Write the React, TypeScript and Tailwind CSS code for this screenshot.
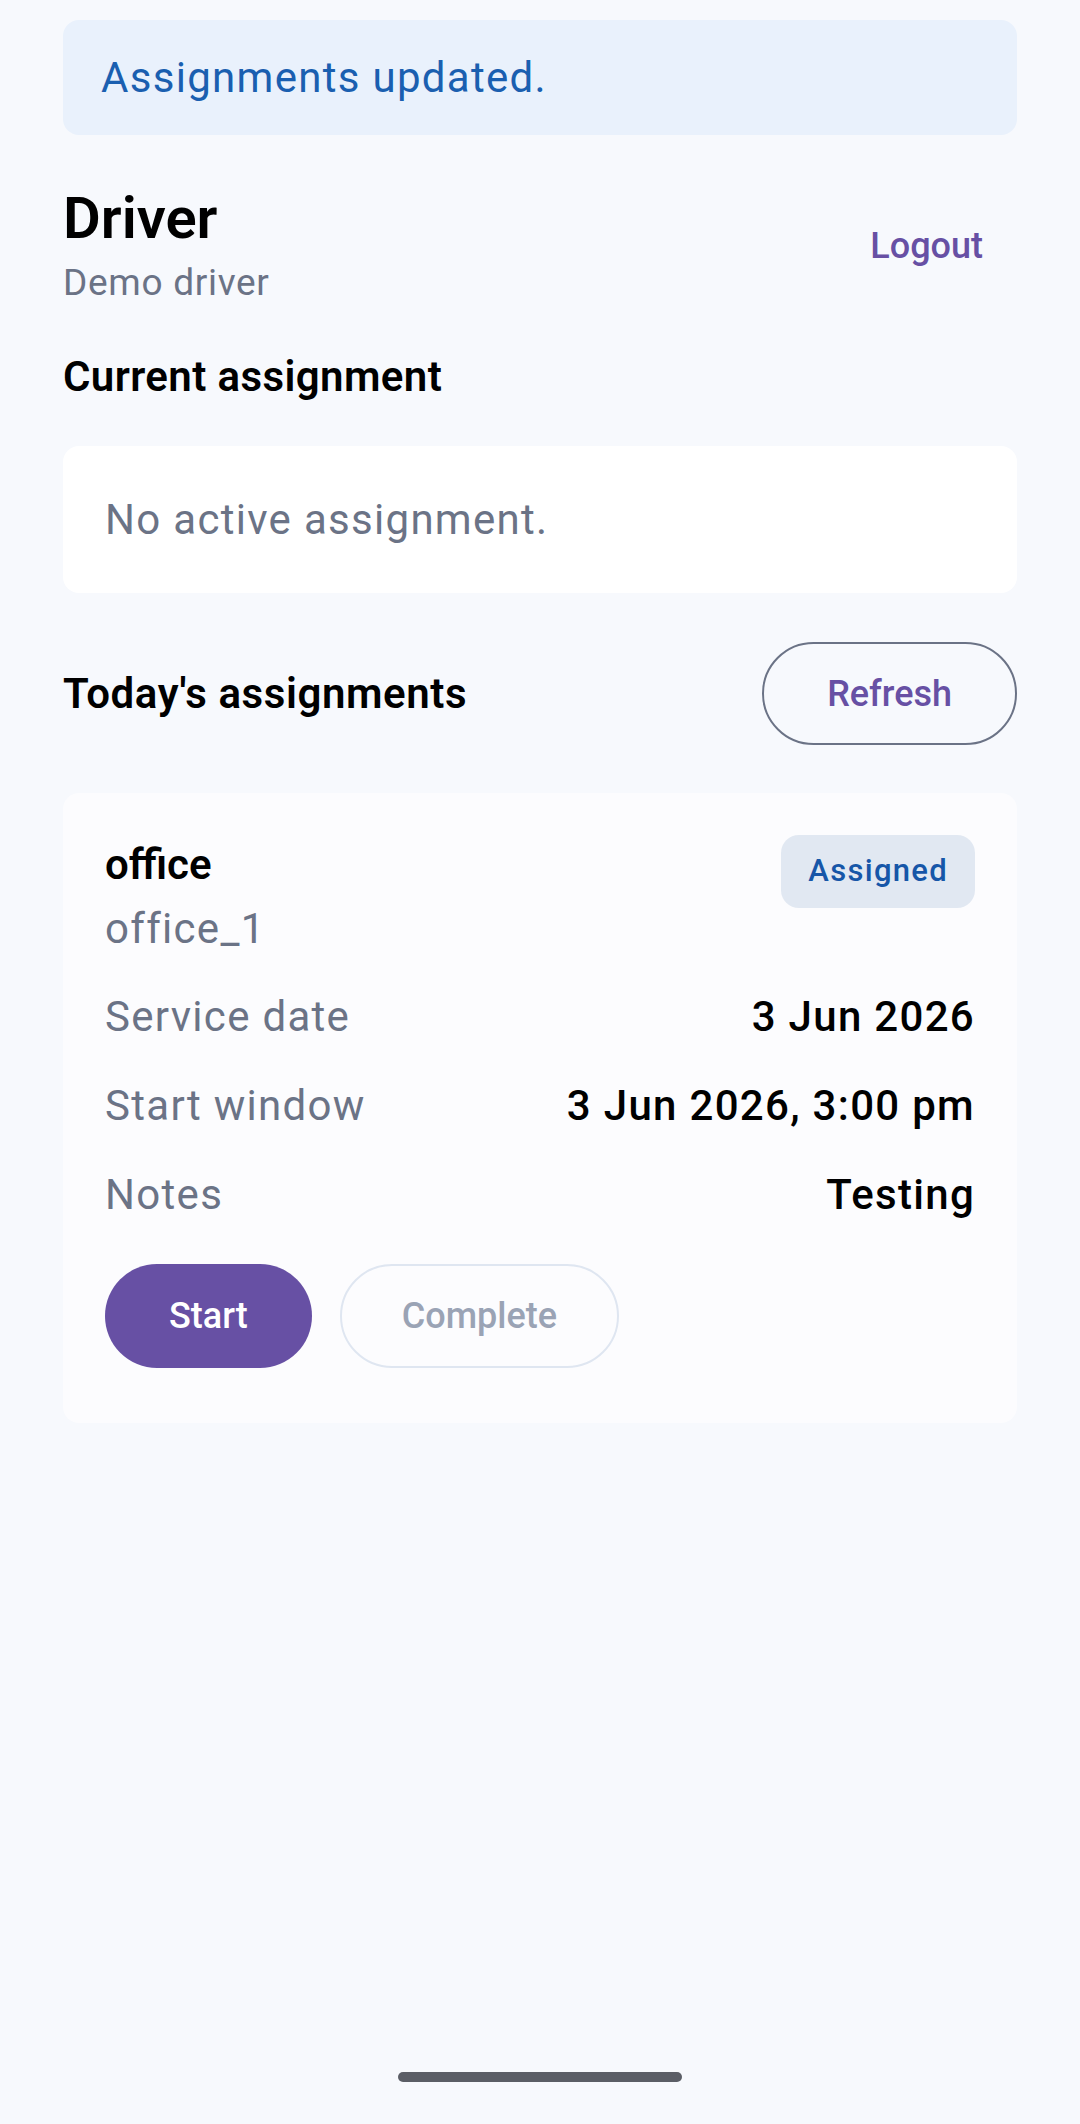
import React from "react";

const rows = [
  { label: "Service date", value: "3 Jun 2026" },
  { label: "Start window", value: "3 Jun 2026, 3:00 pm" },
  { label: "Notes", value: "Testing" },
];

export default function App() {
  return (
    <div className="min-h-[2124px] bg-[#f7f9fd] font-['Roboto',sans-serif] flex flex-col px-[63px] pt-[20px]">
      {/* status banner */}
      <div className="h-[115px] rounded-[16px] bg-[#e9f1fc] px-[38px] flex items-center">
        <p className="text-[42px] leading-[52px] tracking-[1.3px] text-[#1a5fb0]">Assignments updated.</p>
      </div>

      {/* header */}
      <div className="mt-[49px] flex items-center justify-between">
        <div>
          <h1 className="text-[58px] leading-[68px] font-semibold text-black">Driver</h1>
          <p className="mt-[7px] text-[37px] leading-[48px] tracking-[0.7px] text-[#6b7386]">Demo driver</p>
        </div>
        <button className="mr-[34px] text-[36px] leading-[48px] font-medium text-[#6750a4]">Logout</button>
      </div>

      <h2 className="mt-[44px] text-[42px] leading-[52px] font-semibold tracking-[0.4px] text-black">Current assignment</h2>

      <div className="mt-[43px] rounded-[16px] bg-white px-[42px] py-[42px]">
        <p className="text-[42px] leading-[63px] tracking-[1.3px] text-[#6b7386]">No active assignment.</p>
      </div>

      <div className="mt-[49px] flex items-center justify-between">
        <h2 className="text-[42px] leading-[52px] font-semibold tracking-[0.6px] text-black">Today's assignments</h2>
        <button className="h-[103px] px-[63px] rounded-full border-[2.5px] border-[#6b7386] text-[36px] font-medium text-[#6750a4]">
          Refresh
        </button>
      </div>

      {/* assignment card */}
      <div className="mt-[48px] rounded-[16px] bg-[#fcfcfe] px-[42px] pt-[42px] pb-[55px]">
        <div className="flex items-start justify-between">
          <div>
            <p className="text-[42px] leading-[60px] font-semibold text-black">office</p>
            <p className="mt-[6px] text-[42px] leading-[56px] tracking-[1.3px] text-[#6b7386]">office_1</p>
          </div>
          <span className="h-[73px] px-[27px] rounded-[18px] bg-[#e1e8f2] flex items-center text-[31px] font-medium tracking-[1.3px] text-[#1656a8]">
            Assigned
          </span>
        </div>

        <div className="mt-[34px] flex flex-col gap-[37px]">
          {rows.map((r) => (
            <div key={r.label} className="flex items-center justify-between text-[42px] leading-[52px] tracking-[1.3px]">
              <span className="text-[#6b7386]">{r.label}</span>
              <span className="font-medium text-black">{r.value}</span>
            </div>
          ))}
        </div>

        <div className="mt-[43px] flex gap-[28px]">
          <button className="h-[104px] px-[64px] rounded-full bg-[#6750a4] text-[36px] font-medium text-white">Start</button>
          <button className="h-[104px] px-[60px] rounded-full border-[2px] border-[#dfe6f1] text-[36px] font-medium text-[#9aa3b5]">
            Complete
          </button>
        </div>
      </div>

      <div className="mt-auto mb-[42px] self-center w-[284px] h-[10px] rounded-full bg-[#5b5e66]" />
    </div>
  );
}
